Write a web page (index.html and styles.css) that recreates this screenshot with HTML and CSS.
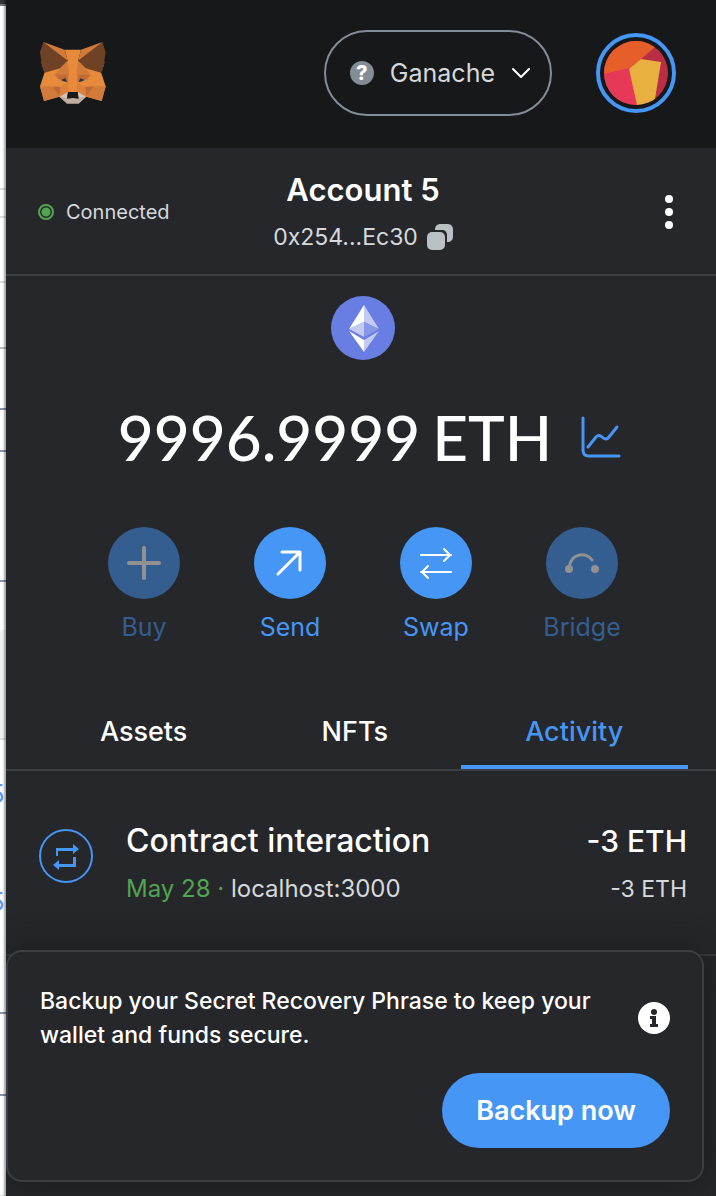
FILE: index.html
```html
<!DOCTYPE html>
<html lang="en">
<head>
<meta charset="utf-8">
<title>MetaMask</title>
<link rel="stylesheet" href="styles.css">
</head>
<body>
<div class="screen">
  <div class="backdrop" aria-hidden="true">
    <svg class="backdrop-art" width="6" height="1196" viewBox="0 0 6 1196">
      <rect width="6" height="4" fill="#35363a"/>
      <rect y="4" width="6" height="2" fill="#77787b"/>
      <rect y="630" width="6" height="109" fill="#f1f1f1"/>
      <g fill="#dcdcdc"><rect y="188" width="6" height="2"/><rect y="216" width="6" height="2"/><rect y="281" width="6" height="2"/><rect y="738" width="6" height="2"/></g>
      <rect y="347" width="6" height="2" fill="#bdbdbd"/>
      <g fill="#8794ac"><rect y="408" width="6" height="2"/><rect y="450" width="6" height="2"/><rect y="580" width="6" height="2"/><rect y="1012" width="6" height="2"/><rect y="1094" width="6" height="2"/></g>
      <g class="backdrop-digit"><text x="-11" y="803">5</text><text x="-11" y="911">5</text></g>
    </svg>
  </div>
  <main class="wallet">
    <header class="topbar">
      <svg class="fox" viewBox="117 124 204 192" role="img" aria-label="MetaMask">
        <g id="half">
          <polygon fill="#e68a3b" points="194,150 219,150 219,278 200,278 178,291 132,304 120,260 134,218 165,200 203,183"/>
          <polygon fill="#d27a3a" points="130,127 194,150 203,183 170,165"/>
          <polygon fill="#6f4225" points="130,127 203,183 181,206 134,219 128,209 129,204 124,200 126,194 122,190 124,183 120,157"/>
          <polygon fill="#d27a3a" points="203,183 207,222 204,246 196,227 165,225 180,206"/>
          <polygon fill="#c06a36" points="165,225 201,225 205,247 175,238"/>
          <polygon fill="#d27a3a" points="120,260 157,260 178,291 132,304"/>
          <polygon fill="#be6936" points="157,260 182,262 178,291"/>
          <polygon fill="#dc813a" points="182,262 205,247 207,276 178,291"/>
          <polygon fill="#233447" points="183,241 196,236 201,248 191,245"/>
          <polygon fill="#d5c3b7" points="178,291 204,276 202,295 197,302"/>
          <polygon fill="#c0ad9f" points="178,291 202,295 219,294 219,312 201,312"/>
          <polygon fill="#17191a" points="204,277 219,277 219,295 201,297"/>
        </g>
        <use href="#half" transform="translate(437 0) scale(-1 1)"/>
      </svg>
      <button class="network" type="button">
        <span class="network-icon">?</span>
        <span>Ganache</span>
        <svg width="20" height="12" viewBox="0 0 20 12" fill="none" stroke="#fff" stroke-width="2" stroke-linecap="round" stroke-linejoin="round"><path d="M2 2l8 8 8-8"/></svg>
      </button>
      <button class="avatar" type="button" aria-label="Account menu">
        <svg viewBox="0 0 64 64" width="64" height="64">
          <clipPath id="disc"><circle cx="32" cy="32" r="32"/></clipPath>
          <g clip-path="url(#disc)">
            <rect width="64" height="64" fill="#b92e44"/>
            <path d="M0 0h58L50 7 37 18 25 28 0 33z" fill="#e65f2b"/>
            <path d="M0 33l25-6 9 37H0z" fill="#e63957"/>
            <path d="M25 28l12-10 20 3-7 43H33z" fill="#e8b03e"/>
          </g>
        </svg>
      </button>
    </header>

    <section class="account">
      <div class="connected"><span class="status-dot"></span>Connected</div>
      <div class="identity">
        <h1 class="account-name">Account 5</h1>
        <button class="address" type="button">0x254...Ec30
          <svg width="26" height="26" viewBox="0 0 26 26" fill="#bbc0c5"><path d="M8 6C8 2 10 0 14 0h6c4 0 6 2 6 6v6c0 4-2 6-6 6V11c0-3-2-5-5-5z"/><rect y="8" width="18" height="18" rx="5"/></svg>
        </button>
      </div>
      <button class="more" type="button" aria-label="Account options">
        <svg width="8" height="36" viewBox="0 0 8 36" fill="#fff"><circle cx="4" cy="5" r="4"/><circle cx="4" cy="18" r="4"/><circle cx="4" cy="31" r="4"/></svg>
      </button>
    </section>

    <section class="overview">
      <svg class="eth" width="64" height="64" viewBox="0 0 64 64">
        <circle cx="32" cy="32" r="32" fill="#687ee3"/>
        <path d="M33 9L18 33l15-7z" fill="#fff"/><path d="M33 9l15 24-15-7z" fill="#c3cbf4"/>
        <path d="M18 33l15-7v15z" fill="#c3cbf4"/><path d="M48 33l-15-7v15z" fill="#8697e8"/>
        <path d="M18 35l15 9v12z" fill="#fff"/><path d="M48 35l-15 9v12z" fill="#c3cbf4"/>
      </svg>
      <div class="balance">
        <span>9996.9999</span><span>ETH</span>
        <a class="chart" href="#portfolio" aria-label="Portfolio">
          <svg width="42" height="42" viewBox="0 0 42 42" fill="none" stroke="#4596f5" stroke-width="3" stroke-linecap="round" stroke-linejoin="round"><path d="M3 2v32q0 6 6 6h30"/><path d="M8 31l8-10q3-3 6 0 4 4 7 0l8-10"/></svg>
        </a>
      </div>
      <div class="actions">
        <button class="action" type="button" disabled>
          <svg class="action-icon" viewBox="0 0 72 72"><path d="M36 21v30M21 36h30" stroke-width="4"/></svg>Buy
        </button>
        <button class="action" type="button">
          <svg class="action-icon" viewBox="0 0 72 72"><path d="M24 47l22-22M28 25h18v18" stroke-width="3"/></svg>Send
        </button>
        <button class="action" type="button">
          <svg class="action-icon" viewBox="0 0 72 72"><path d="M21 28h30M44 22l6 6-6 6M51 45H21M28 39l-6 6 6 6" stroke-width="2"/></svg>Swap
        </button>
        <button class="action" type="button" disabled>
          <svg class="action-icon" viewBox="0 0 72 72"><path d="M23 41c2-16 18-16 23-8" stroke-width="3"/><g fill="currentColor" stroke="none"><circle cx="23" cy="42" r="4"/><circle cx="49" cy="42" r="4"/></g></svg>Bridge
        </button>
      </div>
    </section>

    <nav class="tabs">
      <button class="tab" type="button">Assets</button>
      <button class="tab" type="button">NFTs</button>
      <button class="tab tab-active" type="button">Activity</button>
    </nav>

    <article class="transaction">
      <svg class="tx-icon" width="54" height="54" viewBox="0 0 54 54" fill="#4596f5">
        <circle cx="27" cy="27" r="26" fill="none" stroke="#4596f5" stroke-width="2"/>
        <path d="M17 27v-8h17v-4l6 5-6 5v-3H19v5zM37 28v10H20v3l-6-5 6-5v4h14v-7z"/>
      </svg>
      <div class="tx-main">
        <h2 class="tx-title">Contract interaction</h2>
        <p class="tx-sub"><span class="tx-date">May 28 ·</span> localhost:3000</p>
      </div>
      <div class="tx-amount">
        <p class="tx-title">-3 ETH</p>
        <p class="tx-sub">-3 ETH</p>
      </div>
    </article>
  </main>

  <aside class="notice">
    <div class="notice-row">
      <p class="notice-text">Backup your Secret Recovery Phrase to keep your wallet and funds secure.</p>
      <svg class="notice-icon" width="32" height="32" viewBox="0 0 32 32"><circle cx="16" cy="16" r="16" fill="#fff"/><g fill="#25272b"><circle cx="16" cy="10" r="3"/><path d="M12 14h6v8h2v3h-8v-3h2v-5h-2z"/></g></svg>
    </div>
    <button class="backup" type="button">Backup now</button>
  </aside>
</div>
</body>
</html>
```
FILE: styles.css
```css
* { box-sizing: border-box; }
body {
  margin: 0;
  background: #25272b;
  color: #fff;
  font-family: Inter, "Liberation Sans", sans-serif;
}
h1, h2, p { margin: 0; font-weight: 400; }
button { border: 0; padding: 0; background: none; color: inherit; font: inherit; }
svg { display: block; flex: none; }

.screen {
  position: relative;
  display: grid;
  grid-template-columns: 6px 1fr;
  min-height: 100vh;
}
.backdrop {
  position: relative;
  z-index: 1;
  background: #fff;
  overflow: hidden;
  height: 100vh;
  box-shadow: inset -2px 0 2px #a5a7aa;
}
.backdrop-art { mix-blend-mode: multiply; }
.backdrop-digit { fill: #5f96e8; font-size: 26px; }
.wallet { min-width: 0; }

.topbar {
  display: flex;
  align-items: center;
  height: 148px;
  padding: 0 40px 2px 33px;
  background: #16181a;
}
.fox { width: 68px; height: 64px; margin-right: auto; }
.network {
  display: flex;
  align-items: center;
  gap: 16px;
  height: 86px;
  padding: 0 19px 0 24px;
  margin-right: 44px;
  border: 2px solid #848c96;
  border-radius: 43px;
  color: #d6d9dc;
  font-size: 25px;
}
.network-icon {
  width: 24px;
  height: 24px;
  border-radius: 50%;
  background: #848c96;
  color: #fff;
  font-size: 20px;
  font-weight: 800;
  line-height: 24px;
  text-align: center;
}
.avatar {
  display: grid;
  place-items: center;
  width: 80px;
  height: 80px;
  border: 4px solid #4596f5;
  border-radius: 50%;
}

.account {
  display: grid;
  grid-template-columns: 1fr auto 1fr;
  align-items: center;
  height: 128px;
  padding: 2px 32px 0;
  border-bottom: 2px solid #3b3e42;
}
.connected { display: flex; align-items: center; gap: 12px; color: #d6d9dc; font-size: 20px; }
.status-dot {
  width: 16px;
  height: 16px;
  border: 2px solid #52a451;
  border-radius: 50%;
  background: radial-gradient(circle, #52a451 4px, transparent 5px);
}
.identity { display: grid; justify-items: center; gap: 6px; padding-left: 4px; }
.account-name { font-size: 31px; font-weight: 600; line-height: 44px; }
.address { display: flex; align-items: center; gap: 9px; color: #d6d9dc; font-size: 23px; line-height: 38px; }
.more { justify-self: end; margin-right: 11px; }

.overview { display: grid; justify-items: center; padding: 20px 0 0 4px; }
.balance {
  display: flex;
  align-items: center;
  gap: 12px;
  margin-top: 32px;
  padding-left: 14px;
  font-family: Lato, sans-serif;
  font-size: 62px;
  font-weight: 500;
  line-height: 90px;
}
.chart { margin-left: 16px; }
.actions { display: grid; grid-template-columns: repeat(4, 146px); margin-top: 45px; }
.action {
  display: grid;
  justify-items: center;
  gap: 10px;
  color: #4596f5;
  font-size: 25px;
  line-height: 36px;
}
.action:disabled { color: #355e90; }
.action-icon {
  width: 72px;
  height: 72px;
  border-radius: 50%;
  background: #4596f5;
  color: #fff;
  fill: none;
  stroke: currentColor;
  stroke-linecap: round;
  stroke-linejoin: round;
}
.action:disabled .action-icon { background: #355e90; color: #919191; }

.tabs {
  display: grid;
  grid-template-columns: 13fr 13fr 14fr;
  height: 80px;
  margin-top: 46px;
  padding: 0 28px 0 32px;
  border-bottom: 2px solid #3b3e42;
}
.tab { padding-top: 6px; border-bottom: 4px solid transparent; font-size: 27px; font-weight: 500; }
.tab-active { border-color: #4596f5; color: #4596f5; }

.transaction {
  display: flex;
  gap: 33px;
  padding: 48px 29px 47px 33px;
  border-bottom: 2px solid #3b3e42;
}
.tx-icon { margin-top: 10px; }
.tx-main { flex: 1; min-width: 0; }
.tx-title { font-size: 32px; font-weight: 500; line-height: 44px; }
.tx-sub { margin-top: 8px; color: #d6d9dc; font-size: 24px; line-height: 36px; }
.tx-date { color: #52a451; }
.tx-amount { text-align: right; }
.tx-amount .tx-title { font-size: 30px; }
.tx-amount .tx-sub { font-size: 23px; }

.notice {
  position: absolute;
  left: 6px;
  right: 12px;
  bottom: 14px;
  display: grid;
  padding: 32px;
  border: 2px solid #3b3e42;
  border-radius: 16px;
  background: #25272b;
  box-shadow: 0 0 32px #1a1b1d;
}
.notice-row { display: flex; align-items: center; justify-content: space-between; gap: 24px; }
.notice-text { font-size: 23px; font-weight: 500; line-height: 34px; }
.backup {
  justify-self: end;
  height: 75px;
  margin-top: 21px;
  padding: 0 34px;
  border-radius: 38px;
  background: #4596f5;
  font-size: 27px;
  font-weight: 600;
}
```
